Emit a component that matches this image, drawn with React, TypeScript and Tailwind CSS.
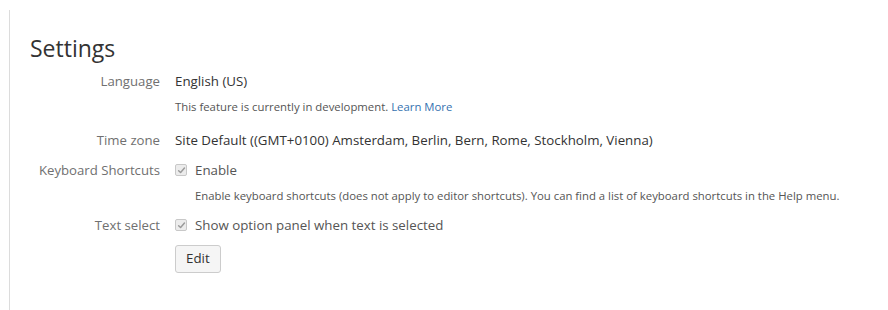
const font = { fontFamily: '"Open Sans", "Noto Sans", sans-serif' };

function Check() {
    return (
        <span className="inline-flex items-center justify-center w-[12px] h-[12px] rounded-[2px] border border-[#c8c8c8] bg-[#ececec] mr-[8px] shrink-0">
            <svg width="9" height="9" viewBox="0 0 10 10" fill="none">
                <path d="M1.8 5.2 4 7.3 8.3 2.3" stroke="#9a9a9a" strokeWidth="1.6" strokeLinecap="round" strokeLinejoin="round" />
            </svg>
        </span>
    );
}

function Row({ label, children, className = '' }: { label?: string; children: React.ReactNode; className?: string }) {
    return (
        <div className={`grid grid-cols-[130px_1fr] gap-x-[15px] ${className}`}>
            <div className="text-right text-[13.2px] leading-[20px] text-[#707070]">{label}</div>
            <div>{children}</div>
        </div>
    );
}

export default function App() {
    return (
        <div className="w-[888px] h-[310px] bg-white overflow-hidden" style={font}>
            <div className="ml-[9px] mt-[10px] h-[300px] border-l border-[#dcdcdc] pl-[20px]">
                <h1 className="text-[23px] leading-[30px] text-[#333] pt-[23px]">Settings</h1>

                <Row label="Language" className="mt-[8px]">
                    <div className="text-[13.3px] leading-[20px] text-[#333]">English (US)</div>
                    <div className="mt-[8px] text-[11.35px] leading-[16px] text-[#555]">
                        This feature is currently in development. <a className="text-[#3572b0]">Learn More</a>
                    </div>
                </Row>

                <Row label="Time zone" className="mt-[15px]">
                    <div className="text-[13.3px] leading-[20px] text-[#333]">
                        Site Default ((GMT+0100) Amsterdam, Berlin, Bern, Rome, Stockholm, Vienna)
                    </div>
                </Row>

                <Row label="Keyboard Shortcuts" className="mt-[10px]">
                    <div className="flex items-center text-[13.3px] leading-[20px] text-[#555]">
                        <Check />
                        Enable
                    </div>
                    <div className="mt-[8px] pl-[20px] text-[11.35px] leading-[16px] text-[#555]">
                        Enable keyboard shortcuts (does not apply to editor shortcuts). You can find a list of keyboard shortcuts in the Help menu.
                    </div>
                </Row>

                <Row label="Text select" className="mt-[11px]">
                    <div className="flex items-center text-[13.3px] leading-[20px] text-[#555]">
                        <Check />
                        Show option panel when text is selected
                    </div>
                </Row>

                <Row className="mt-[10px]">
                    <button className="h-[28px] px-[10px] rounded-[3px] border border-[#ccc] bg-[#f5f5f5] text-[13.3px] text-[#333]">
                        Edit
                    </button>
                </Row>
            </div>
        </div>
    );
}
